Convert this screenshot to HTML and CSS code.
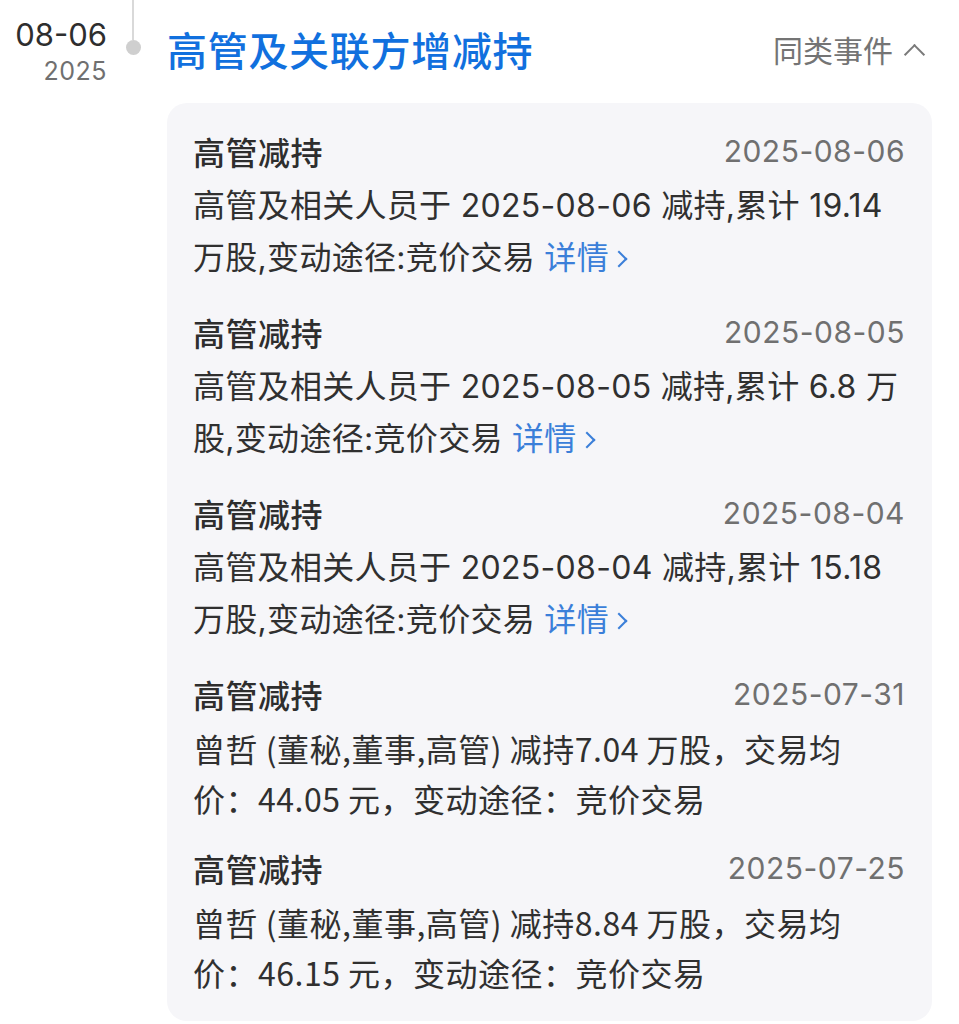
FILE: index.html
```html
<!DOCTYPE html>
<html lang="zh-CN">
<head>
    <meta charset="UTF-8">
    <meta name="viewport" content="width=device-width, initial-scale=1.0">
    <title>高管及关联方增减持</title>
    <link rel="stylesheet" href="styles.css">
</head>
<body>
    <div class="event">
        <div class="date">
            <div class="day">08-06</div>
            <div class="year">2025</div>
        </div>
        <div class="axis">
            <div class="line"></div>
            <div class="dot"></div>
        </div>
        <div class="content">
            <div class="header">
                <div class="title">高管及关联方增减持</div>
                <div class="similar">同类事件<span class="arrow-up"></span></div>
            </div>
            <div class="card">
                <div class="item">
                    <div class="item-head">
                        <span class="item-title">高管减持</span>
                        <span class="item-date">2025-08-06</span>
                    </div>
                    <div class="item-text">高管及相关人员于 2025-08-06 减持,累计 19.14 万股,变动途径:竞价交易 <a class="more" href="#">详情<span class="arrow-right"></span></a></div>
                </div>
                <div class="item">
                    <div class="item-head">
                        <span class="item-title">高管减持</span>
                        <span class="item-date">2025-08-05</span>
                    </div>
                    <div class="item-text">高管及相关人员于 2025-08-05 减持,累计 6.8 万股,变动途径:竞价交易 <a class="more" href="#">详情<span class="arrow-right"></span></a></div>
                </div>
                <div class="item">
                    <div class="item-head">
                        <span class="item-title">高管减持</span>
                        <span class="item-date">2025-08-04</span>
                    </div>
                    <div class="item-text">高管及相关人员于 2025-08-04 减持,累计 15.18 万股,变动途径:竞价交易 <a class="more" href="#">详情<span class="arrow-right"></span></a></div>
                </div>
                <div class="item">
                    <div class="item-head">
                        <span class="item-title">高管减持</span>
                        <span class="item-date">2025-07-31</span>
                    </div>
                    <div class="item-text plain">曾哲 (董秘,董事,高管) 减持7.04 万股，交易均价：44.05 元，变动途径：竞价交易</div>
                </div>
                <div class="item">
                    <div class="item-head">
                        <span class="item-title">高管减持</span>
                        <span class="item-date">2025-07-25</span>
                    </div>
                    <div class="item-text plain">曾哲 (董秘,董事,高管) 减持8.84 万股，交易均价：46.15 元，变动途径：竞价交易</div>
                </div>
            </div>
        </div>
    </div>
</body>
</html>
```

FILE: styles.css
```css
body {
    margin: 0;
    background: #fff;
    font-family: Inter, "Noto Sans CJK SC", sans-serif;
    color: #303030;
}
.event {
    display: flex;
}
.date {
    width: 107px;
    padding-top: 15px;
    text-align: right;
}
.day {
    font-size: 31px;
    line-height: 40px;
    color: #2e2e2e;
}
.year {
    font-size: 25px;
    line-height: 32px;
    letter-spacing: 0.5px;
    color: #707070;
}
.axis {
    width: 52px;
    display: flex;
    flex-direction: column;
    align-items: center;
}
.line {
    width: 2px;
    height: 40px;
    background: #d9d9d9;
}
.dot {
    width: 15px;
    height: 15px;
    border-radius: 50%;
    background: #cfcfcf;
}
.content {
    flex: 1;
    margin-left: 8px;
    padding: 21px 27px 0 0;
}
.header {
    display: flex;
    justify-content: space-between;
    align-items: center;
    height: 56px;
    margin-bottom: 26px;
}
.title {
    font-family: "Noto Sans CJK SC", sans-serif;
    font-size: 40px;
    font-weight: 500;
    letter-spacing: 0.7px;
    color: #1170de;
}
.similar {
    display: flex;
    align-items: center;
    font-family: "Noto Sans CJK SC", sans-serif;
    font-size: 30px;
    color: #747474;
    padding-right: 10px;
}
.arrow-up {
    display: inline-block;
    width: 13px;
    height: 13px;
    margin: 10px 0 0 14px;
    border-left: 2px solid #7a7a7a;
    border-top: 2px solid #7a7a7a;
    transform: rotate(45deg);
}
.card {
    background: #f6f6f9;
    border-radius: 20px;
    padding: 22px 27px 24px 26px;
}
.item + .item {
    margin-top: 22px;
}
.item:last-child {
    margin-top: 19px;
}
.item-head {
    display: flex;
    justify-content: space-between;
    align-items: center;
    height: 52px;
    margin-bottom: 3px;
}
.item-title {
    font-family: "Noto Sans CJK SC", sans-serif;
    font-size: 32px;
    font-weight: 500;
    letter-spacing: 0.5px;
    color: #2e2e2e;
}
.item-date {
    font-size: 30px;
    letter-spacing: 0.5px;
    color: #707070;
}
.item-text {
    font-size: 32px;
    line-height: 52px;
    letter-spacing: 0.3px;
}
.item-text.plain {
    font-family: "Noto Sans CJK SC", sans-serif;
    line-height: 50px;
    letter-spacing: 0.5px;
    padding-right: 8px;
}
.more {
    color: #3b7fd9;
    text-decoration: none;
    white-space: nowrap;
}
.arrow-right {
    display: inline-block;
    width: 10px;
    height: 10px;
    margin: 0 6px 4px 4px;
    border-right: 2px solid #3b7fd9;
    border-top: 2px solid #3b7fd9;
    transform: rotate(45deg);
}
```
